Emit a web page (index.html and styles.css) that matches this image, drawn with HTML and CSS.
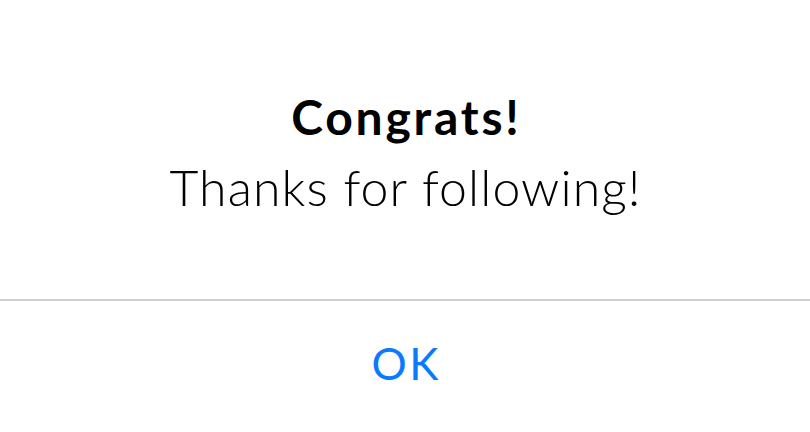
FILE: index.html
```html
<!DOCTYPE html>
<html>
<head>
<meta charset="utf-8">
<link rel="stylesheet" href="styles.css">
</head>
<body>
<div class="alert">
  <div class="alert-body">
    <div class="alert-title">Congrats!</div>
    <div class="alert-message">Thanks for following!</div>
  </div>
  <div class="alert-actions">
    <button class="alert-button">OK</button>
  </div>
</div>
</body>
</html>
```
FILE: styles.css
```css
html, body {
  margin: 0;
  padding: 0;
  background: #ffffff;
}
.alert {
  width: 810px;
  height: 432px;
  display: flex;
  flex-direction: column;
  font-family: Lato, "Open Sans", sans-serif;
}
.alert-body {
  display: flex;
  flex-direction: column;
  align-items: center;
  justify-content: center;
  padding-top: 4px;
  border-bottom: 2px solid #cfcfcf;
  box-sizing: border-box;
  height: 301px;
}
.alert-title {
  font-weight: 700;
  font-size: 48px;
  line-height: 71px;
  letter-spacing: 2.8px;
  margin-right: -2.8px;
  color: #000;
}
.alert-message {
  font-weight: 300;
  font-size: 50px;
  line-height: 70px;
  letter-spacing: 1.1px;
  margin-right: -1.1px;
  color: #000;
}
.alert-actions {
  flex: 1;
  display: flex;
  align-items: center;
  justify-content: center;
  padding-bottom: 8px;
}
.alert-button {
  background: none;
  border: 0;
  padding: 0;
  font-family: Lato, "Open Sans", sans-serif;
  font-weight: 400;
  font-size: 44px;
  letter-spacing: 2.5px;
  margin-right: -2.5px;
  color: #0a7bff;
}
```
